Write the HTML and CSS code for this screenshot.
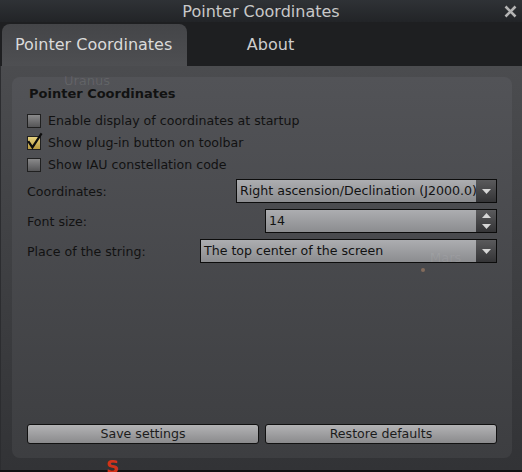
FILE: index.html
```html
<!DOCTYPE html>
<html>
<head>
<meta charset="utf-8">
<title>Pointer Coordinates</title>
<link rel="stylesheet" href="styles.css">
</head>
<body>
<div class="window">
  <div class="titlebar">
    <span class="title">Pointer Coordinates</span>
    <button class="close" aria-label="Close">
      <svg width="13" height="13" viewBox="0 0 13 13"><path d="M1.5 1.5 L11.5 11.5 M11.5 1.5 L1.5 11.5" stroke="#b4b4b4" stroke-width="2.6" stroke-linecap="butt" fill="none"/></svg>
    </button>
  </div>
  <div class="tabbar">
    <div class="tab active">Pointer Coordinates</div>
    <div class="tab plain">About</div>
  </div>
  <div class="panel">
    <div class="group">
      <div class="group-title">Pointer Coordinates</div>
      <div class="checks">
        <label class="check"><span class="box"></span>Enable display of coordinates at startup</label>
        <label class="check"><span class="box checked"><svg class="tick" width="16" height="16" viewBox="0 0 16 16"><path d="M1.2 7.2 L5.4 13.4 L14.6 -0.6" stroke="#0d0d0d" stroke-width="2.2" fill="none"/></svg></span>Show plug-in button on toolbar</label>
        <label class="check"><span class="box"></span>Show IAU constellation code</label>
      </div>
      <div class="form">
        <div class="row">
          <span class="lbl">Coordinates:</span>
          <div class="field combo w-coords">
            <span class="val">Right ascension/Declination (J2000.0)</span>
            <span class="arrow"><svg width="9" height="5" viewBox="0 0 9 5"><path d="M0 0 H9 L4.5 5 Z" fill="#d6d6d6"/></svg></span>
          </div>
        </div>
        <div class="row">
          <span class="lbl">Font size:</span>
          <div class="field spin w-size">
            <span class="val">14</span>
            <span class="arrow spin-arrows">
              <svg width="9" height="5" viewBox="0 0 9 5"><path d="M0 5 H9 L4.5 0 Z" fill="#d6d6d6"/></svg>
              <svg width="9" height="5" viewBox="0 0 9 5"><path d="M0 0 H9 L4.5 5 Z" fill="#d6d6d6"/></svg>
            </span>
          </div>
        </div>
        <div class="row">
          <span class="lbl">Place of the string:</span>
          <div class="field combo w-place">
            <span class="val">The top center of the screen</span>
            <span class="arrow"><svg width="9" height="5" viewBox="0 0 9 5"><path d="M0 0 H9 L4.5 5 Z" fill="#d6d6d6"/></svg></span>
          </div>
        </div>
      </div>
      <div class="spacer"></div>
      <div class="buttons">
        <button class="btn">Save settings</button>
        <button class="btn">Restore defaults</button>
      </div>
    </div>
  </div>
</div>
<span class="sky uranus">Uranus</span>
<span class="sky mars">Mars</span>
<span class="sky-dot"></span>
<span class="sky-red">S</span>
</body>
</html>
```
FILE: styles.css
```css
* { box-sizing: border-box; }
html, body { margin: 0; padding: 0; }
body {
  width: 522px;
  height: 472px;
  overflow: hidden;
  position: relative;
  background: #121212;
  font-family: "DejaVu Sans", "Liberation Sans", sans-serif;
}
.window {
  height: 470px;
  display: flex;
  flex-direction: column;
}
.titlebar {
  height: 22px;
  display: grid;
  grid-template-columns: 1fr auto 1fr;
  align-items: center;
  background: linear-gradient(#2f3236, #222427);
}
.title {
  grid-column: 2;
  color: #c8c8c8;
  font-size: 16px;
  line-height: 22px;
  padding-top: 1px;
}
.close {
  grid-column: 3;
  justify-self: end;
  margin-right: 5px;
  width: 13px;
  height: 13px;
  padding: 0;
  border: 0;
  background: none;
  display: flex;
}
.tabbar {
  height: 44px;
  display: flex;
  align-items: flex-end;
  background: #1e1f21;
}
.tab {
  height: 42px;
  line-height: 42px;
  font-size: 16px;
  color: #cdcdcd;
}
.tab.active {
  margin-left: 2px;
  width: 185px;
  padding-left: 13px;
  border-radius: 8px 8px 0 0;
  background: linear-gradient(#444548, #4e4f52);
  color: #dadada;
}
.tab.plain {
  width: 167px;
  text-align: center;
}
.panel {
  flex: 1;
  display: flex;
  padding: 11px 10px 12px 11px;
  border-left: 1px solid #2c2d30;
  background: linear-gradient(#4b4c4f, #323336);
}
.group {
  flex: 1;
  display: flex;
  flex-direction: column;
  border-radius: 8px;
  background: linear-gradient(#525357, #3d3e41);
  padding: 9px 15px 14px 15px;
  color: #121212;
  font-size: 12.6px;
}
.group-title {
  font-weight: bold;
  font-size: 13px;
  line-height: 16px;
  padding-left: 2px;
}
.checks {
  margin-top: 8px;
  display: flex;
  flex-direction: column;
}
.check {
  height: 22px;
  display: flex;
  align-items: center;
  gap: 7px;
  line-height: 22px;
}
.box {
  position: relative;
  width: 14px;
  height: 14px;
  border: 1px solid #202020;
  background: linear-gradient(#8a8a8b, #555557);
}
.box.checked {
  background: linear-gradient(#e6d27f, #b99a3e);
}
.tick {
  position: absolute;
  left: -1px;
  top: -3px;
  overflow: visible;
}
.form {
  margin-top: 3px;
  display: flex;
  flex-direction: column;
  gap: 6px;
}
.row {
  height: 24px;
  display: flex;
  align-items: center;
  justify-content: space-between;
}
.field {
  height: 24px;
  display: flex;
  border: 1px solid #0c0c0c;
  background: linear-gradient(#acadb0, #8b8c8f);
}
.w-coords { width: 261px; }
.w-size { width: 232px; }
.w-place { width: 297px; }
.val {
  flex: 1;
  padding-left: 3px;
  line-height: 22px;
  white-space: nowrap;
  overflow: hidden;
}
.arrow {
  width: 20px;
  flex: none;
  display: flex;
  align-items: center;
  justify-content: center;
  background: linear-gradient(#5a5a5c, #343436);
}
.spin-arrows {
  flex-direction: column;
  gap: 6px;
}
.spacer { flex: 1; }
.buttons {
  display: flex;
  gap: 6px;
}
.btn {
  flex: 1;
  height: 20px;
  padding: 0;
  border: 1px solid #111;
  border-radius: 3px;
  background: linear-gradient(#b3b3b5, #8a8a8c);
  font-family: "DejaVu Sans", "Liberation Sans", sans-serif;
  font-size: 12.6px;
  color: #1c1c1c;
  line-height: 18px;
}
.sky {
  position: absolute;
  font-size: 13px;
  line-height: 16px;
  color: rgba(255, 255, 255, 0.1);
}
.uranus { left: 64px; top: 73px; }
.mars { left: 430px; top: 250px; color: rgba(255, 255, 255, 0.08); }
.sky-dot {
  position: absolute;
  left: 421px;
  top: 268px;
  width: 4px;
  height: 4px;
  border-radius: 50%;
  background: rgba(205, 150, 110, 0.45);
}
.sky-red {
  position: absolute;
  left: 106px;
  top: 458px;
  font-size: 18px;
  line-height: 18px;
  font-weight: bold;
  color: #d2321a;
}
```
